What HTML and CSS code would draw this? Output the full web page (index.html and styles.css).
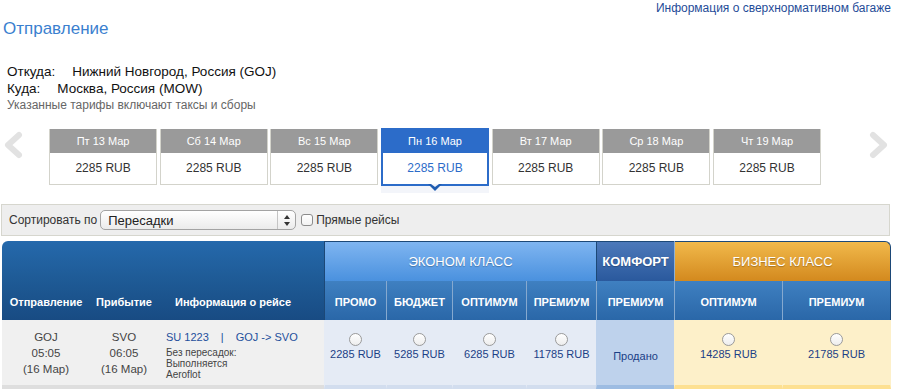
FILE: index.html
```html
<!DOCTYPE html>
<html lang="ru">
<head>
    <meta charset="UTF-8">
    <title>Отправление</title>
    <link rel="stylesheet" href="styles.css">
</head>
<body>
<div class="page">
    <div class="top-links"><a href="#">Информация о сверхнормативном багаже</a></div>
    <h1 class="title">Отправление</h1>

    <div class="route">
        <div class="route-line"><span class="route-label">Откуда:</span>Нижний Новгород, Россия (GOJ)</div>
        <div class="route-line"><span class="route-label">Куда:</span>Москва, Россия (MOW)</div>
        <div class="route-note">Указанные тарифы включают таксы и сборы</div>
    </div>

    <div class="dates">
        <div class="arrow arrow-prev">
            <svg width="24" height="28" viewBox="0 0 24 28"><polyline points="18,4 7,14 18,24" fill="none" stroke="#e2e2e2" stroke-width="6" stroke-linecap="round" stroke-linejoin="round"/></svg>
        </div>
        <div class="date-list">
            <div class="date"><div class="date-head">Пт 13 Мар</div><div class="date-price">2285 RUB</div></div>
            <div class="date"><div class="date-head">Сб 14 Мар</div><div class="date-price">2285 RUB</div></div>
            <div class="date"><div class="date-head">Вс 15 Мар</div><div class="date-price">2285 RUB</div></div>
            <div class="date active"><div class="date-head">Пн 16 Мар</div><div class="date-price">2285 RUB</div></div>
            <div class="date"><div class="date-head">Вт 17 Мар</div><div class="date-price">2285 RUB</div></div>
            <div class="date"><div class="date-head">Ср 18 Мар</div><div class="date-price">2285 RUB</div></div>
            <div class="date"><div class="date-head">Чт 19 Мар</div><div class="date-price">2285 RUB</div></div>
        </div>
        <div class="arrow arrow-next">
            <svg width="24" height="28" viewBox="0 0 24 28"><polyline points="6,4 17,14 6,24" fill="none" stroke="#e2e2e2" stroke-width="6" stroke-linecap="round" stroke-linejoin="round"/></svg>
        </div>
    </div>

    <div class="sort-bar">
        <span class="sort-label">Сортировать по</span>
        <div class="select">
            <span class="select-value">Пересадки</span>
            <span class="select-arrows">
                <svg width="6" height="11" viewBox="0 0 6 11"><path d="M3 0 L6 4 L0 4 Z M3 11 L6 7 L0 7 Z" fill="#333"/></svg>
            </span>
        </div>
        <span class="checkbox"></span>
        <span class="check-label">Прямые рейсы</span>
    </div>

    <table class="fares">
        <colgroup>
            <col class="c-dep"><col class="c-arr"><col class="c-info">
            <col class="c-promo"><col class="c-budget"><col class="c-opt"><col class="c-prem">
            <col class="c-comfort"><col class="c-bopt"><col class="c-bprem">
        </colgroup>
        <thead>
            <tr class="class-row">
                <th colspan="3" class="corner"></th>
                <th colspan="4" class="econ">ЭКОНОМ КЛАСС</th>
                <th class="comfort">КОМФОРТ</th>
                <th colspan="2" class="business">БИЗНЕС КЛАСС</th>
            </tr>
            <tr class="fare-row">
                <th class="lbl">Отправление</th>
                <th class="lbl">Прибытие</th>
                <th class="lbl lbl-info">Информация о рейсе</th>
                <th class="fare first">ПРОМО</th>
                <th class="fare">БЮДЖЕТ</th>
                <th class="fare">ОПТИМУМ</th>
                <th class="fare">ПРЕМИУМ</th>
                <th class="fare">ПРЕМИУМ</th>
                <th class="fare">ОПТИМУМ</th>
                <th class="fare last">ПРЕМИУМ</th>
            </tr>
        </thead>
        <tbody>
            <tr class="flight">
                <td class="time">GOJ<br>05:05<br>(16 Мар)</td>
                <td class="time">SVO<br>06:05<br>(16 Мар)</td>
                <td class="info">
                    <div class="flight-title"><span>SU 1223</span><span class="sep">|</span><span>GOJ -&gt; SVO</span></div>
                    <div class="flight-note">Без пересадок:<br>Выполняется<br>Aeroflot</div>
                </td>
                <td class="price econ-cell first"><span class="radio"></span><div>2285 RUB</div></td>
                <td class="price econ-cell"><span class="radio"></span><div>5285 RUB</div></td>
                <td class="price econ-cell"><span class="radio"></span><div>6285 RUB</div></td>
                <td class="price econ-cell"><span class="radio"></span><div>11785 RUB</div></td>
                <td class="price comfort-cell sold">Продано</td>
                <td class="price business-cell"><span class="radio"></span><div>14285 RUB</div></td>
                <td class="price business-cell last"><span class="radio"></span><div>21785 RUB</div></td>
            </tr>
        </tbody>
    </table>
</div>
</body>
</html>
```

FILE: styles.css
```css
html {
    font-family: "Liberation Sans", Arial, sans-serif;
    color: #333;
    background-color: #fff;
}
body {
    margin: 0;
}

.page {
    width: 891px;
}

.top-links {
    height: 18px;
    line-height: 16px;
    font-size: 12px;
    text-align: right;
}
.top-links a {
    color: #1f4c98;
    text-decoration: none;
}

.title {
    margin: 0;
    padding-left: 3px;
    font-size: 17px;
    line-height: 22px;
    font-weight: normal;
    color: #3b7fcf;
}

.route {
    margin: 23px 0 0 7px;
}
.route-line {
    font-size: 13.5px;
    line-height: 17px;
    color: #111;
}
.route-label {
    margin-right: 17px;
}
.route-note {
    font-size: 12px;
    line-height: 16px;
    color: #666;
}

/* date strip */
.dates {
    display: flex;
    align-items: flex-start;
    height: 58px;
    margin-top: 15px;
}
.arrow-prev {
    width: 50px;
}
.arrow svg {
    display: block;
    margin-top: 3px;
}
.arrow-prev svg {
    margin-left: 1px;
}
.arrow-next {
    margin-left: 46px;
}
.date-list {
    display: flex;
    align-items: flex-start;
    gap: 2.67px;
}
.date {
    width: 108px;
    box-sizing: border-box;
    margin-top: 1px;
    border: 1px solid #d3d3cb;
    border-top: none;
    text-align: center;
    background-color: #fff;
}
.date-head {
    height: 24px;
    line-height: 24px;
    background-color: #9a9a9a;
    color: #fff;
    font-size: 11px;
}
.date-price {
    height: 31px;
    line-height: 31px;
    font-size: 12px;
    color: #333;
}
.date.active {
    position: relative;
    margin-top: 0;
    border: 2px solid #2c6cc9;
    box-shadow: 0 7px 0 #f3f5fa;
}
.date.active .date-head {
    height: 23px;
    line-height: 23px;
    background-color: #2c6cc9;
}
.date.active .date-price {
    color: #2c6cc9;
}
.date.active::before,
.date.active::after {
    content: "";
    position: absolute;
    left: 50%;
    width: 0;
    height: 0;
    border-style: solid;
    border-color: transparent;
}
.date.active::before {
    top: 100%;
    margin-left: -7px;
    border-width: 7px 7px 0 7px;
    border-top-color: #1f5cb0;
}
.date.active::after {
    top: 100%;
    margin-left: -4px;
    border-width: 3px 4px 0 4px;
    border-top-color: #f3f5fa;
}

/* sort bar */
.sort-bar {
    display: flex;
    align-items: center;
    box-sizing: border-box;
    width: 889px;
    height: 32px;
    margin: 18px 0 0 1px;
    padding: 0 7px;
    border: 1px solid #d6d6ce;
    background-color: #eee;
    font-size: 12px;
    color: #333;
}
.select {
    display: flex;
    align-items: center;
    box-sizing: border-box;
    width: 196px;
    height: 20px;
    margin-left: 3px;
    border: 1px solid #a3a3a3;
    border-radius: 5px;
    background: linear-gradient(#ffffff, #ebebeb);
}
.select-value {
    flex: 1;
    padding-left: 7px;
    font-size: 13px;
    color: #222;
}
.select-arrows {
    display: flex;
    align-items: center;
    justify-content: center;
    width: 17px;
    height: 100%;
    border-left: 1px solid #c4c4c4;
}
.select-arrows svg {
    display: block;
}
.checkbox {
    box-sizing: border-box;
    width: 12px;
    height: 12px;
    margin: 0 3px 0 5px;
    border: 1px solid #8c8c8c;
    border-radius: 3px;
    background: linear-gradient(#ffffff, #f2f2f2);
}

/* fares table */
.fares {
    width: 889px;
    margin: 5px 0 0 2px;
    border-collapse: separate;
    border-spacing: 0;
    table-layout: fixed;
}
.c-dep { width: 88px; }
.c-arr { width: 68px; }
.c-info { width: 166px; }
.c-promo { width: 62px; }
.c-budget { width: 66px; }
.c-opt { width: 74px; }
.c-prem { width: 70px; }
.c-comfort { width: 78px; }
.c-bopt { width: 108px; }
.c-bprem { width: 109px; }

.fares th {
    padding: 0;
    color: #fff;
    font-weight: normal;
}
.class-row th {
    height: 40px;
    box-sizing: border-box;
    font-size: 13px;
    border-top: 1px solid #1c4877;
    text-shadow: 0 1px 1px rgba(0, 0, 0, 0.25);
}
.class-row .corner {
    border-top: none;
    border-top-left-radius: 6px;
    background: linear-gradient(#2569ac, #1e5a95);
}
.class-row .econ {
    border-left: 1px solid #1c4877;
    background: linear-gradient(#7fb5f1, #4a91de);
}
.class-row .comfort {
    border-left: 1px solid #1c4877;
    font-weight: bold;
    background: linear-gradient(#4c79ba, #2a599d);
}
.class-row .business {
    border-left: 1px solid #8fb0d3;
    border-right: 1px solid #1c4877;
    border-top-right-radius: 6px;
    background: linear-gradient(#f1b94b, #d3891e);
}

.fare-row th {
    height: 39px;
    box-sizing: border-box;
    padding-top: 2px;
    font-size: 11px;
    font-weight: bold;
}
.fare-row .lbl {
    background: linear-gradient(#1e5a95, #184b83);
}
.fare-row .lbl-info {
    text-align: left;
    padding-left: 17px;
}
.fare-row .fare {
    border-left: 1px solid #86a9cf;
    background: linear-gradient(#3f80c1, #2a67a8);
}
.fare-row .fare.first {
    border-left-color: #1c4877;
}
.fare-row .fare.last {
    border-right: 1px solid #1c4877;
}

.flight td {
    height: 69px;
    box-sizing: border-box;
    padding: 0;
    vertical-align: top;
    border-bottom: 4px solid #dedede;
    background-color: #f0f0f0;
    font-size: 11.5px;
    color: #444;
}
.flight .time {
    padding-top: 9px;
    line-height: 16px;
    text-align: center;
}
.flight .info {
    padding: 9px 0 0 8px;
}
.flight-title {
    font-size: 11px;
    line-height: 16px;
    color: #1e4f9c;
}
.flight-title .sep {
    margin: 0 12px;
}
.flight-note {
    margin-top: 2px;
    font-size: 10px;
    line-height: 11px;
    color: #444;
}

.flight .price {
    padding-top: 13px;
    text-align: center;
    font-size: 11px;
    line-height: 14px;
    color: #1b3f86;
}
.flight .price div {
    margin-top: 1px;
}
.radio {
    display: block;
    box-sizing: border-box;
    width: 13px;
    height: 13px;
    margin: 0 auto;
    border: 1px solid #9a9a9a;
    border-radius: 50%;
    background: linear-gradient(#ffffff, #ededed);
}
.flight .econ-cell {
    border-left: 1px solid transparent;
    background-color: #e5ebf5;
    border-bottom-color: #d2ddee;
}
.flight .comfort-cell {
    border-left: 1px solid transparent;
    background-color: #bed2ec;
    border-bottom-color: #9dbce2;
}
.flight .sold {
    padding-top: 29px;
}
.flight .business-cell {
    border-left: 1px solid transparent;
    background-color: #fdf0c9;
    border-bottom-color: #fde091;
}
.flight .business-cell.last {
    border-right: 1px solid transparent;
}
```
